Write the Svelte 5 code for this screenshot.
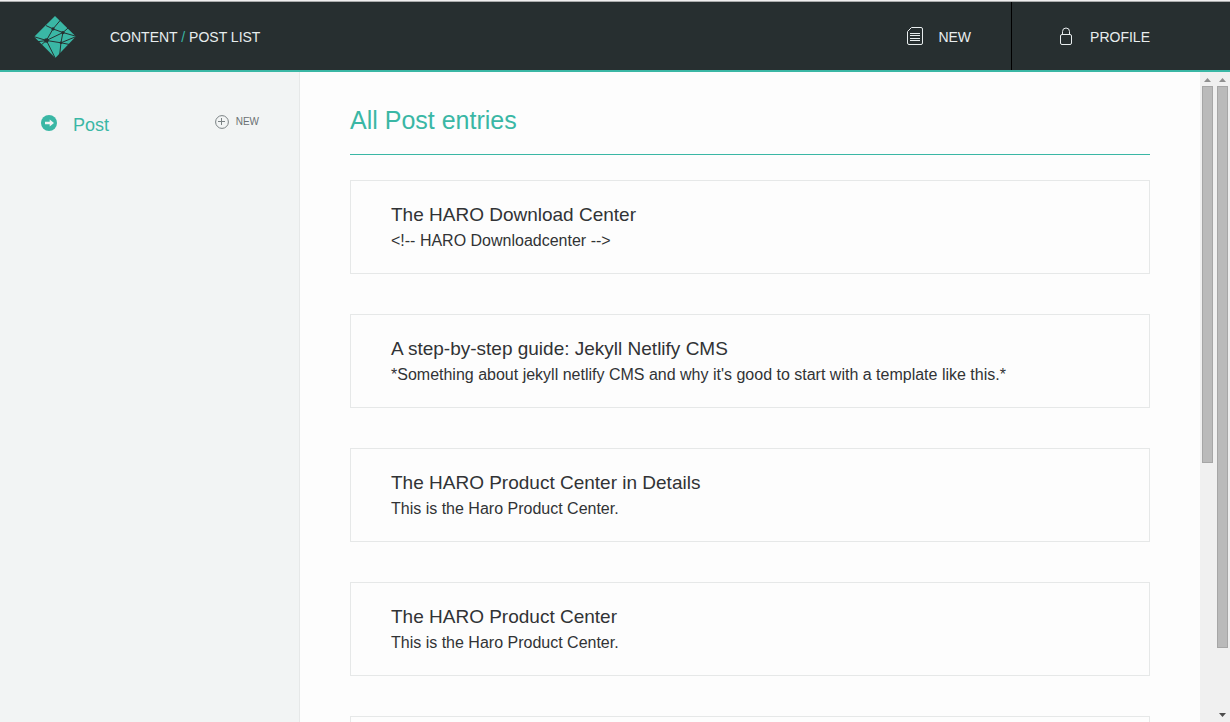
<script>
  const posts = [
    { title: 'The HARO Download Center', text: '<!-- HARO Downloadcenter -->' },
    {
      title: 'A step-by-step guide: Jekyll Netlify CMS',
      text: "*Something about jekyll netlify CMS and why it's good to start with a template like this.*"
    },
    { title: 'The HARO Product Center in Details', text: 'This is the Haro Product Center.' },
    { title: 'The HARO Product Center', text: 'This is the Haro Product Center.' },
    { title: '', text: '' }
  ];
</script>

<div class="app">
  <header>
    <a class="logo" href="#/" aria-label="Home">
      <svg width="42" height="42" viewBox="42 47 126 127">
        <path d="M105 47 168 109 106 174 42 110Z" fill="#3ab7a5" />
        <g stroke="#272f30" stroke-width="3" fill="none">
          <path d="M99 86 78 76M99 86 121 60M99 86 129 97M99 86 79 121" />
          <path d="M129 97 168 108M129 97 145 83M129 97 79 121M129 97 123 128" />
          <path d="M79 121 40 109M79 121 52 125M79 121 64 134M79 121 106 175M79 121 123 128" />
          <path d="M123 128 167 110M123 128 148 133M123 128 119 166" />
        </g>
        <g fill="#272f30">
          <circle cx="99" cy="86" r="5" />
          <circle cx="129" cy="97" r="5" />
          <circle cx="79" cy="121" r="7" />
          <circle cx="123" cy="128" r="4" />
        </g>
      </svg>
    </a>
    <nav class="crumbs" aria-label="Breadcrumb">
      <a href="#/content">CONTENT</a> <span>/</span> <a href="#/post">POST LIST</a>
    </nav>
    <div class="actions">
      <button class="new">
        <svg width="16" height="20" viewBox="0 0 16 20" fill="none" stroke="#e8edee">
          <path d="M4.500 1.500H14Q15.500 1.500 15.500 3V17Q15.500 18.500 14 18.500H2Q.5 18.500 .5 17V5.500Z" />
          <path d="M3 7.500H13M3 9.500H13M3 12.500H13M3 14.500H13" />
        </svg>
        <span>NEW</span>
      </button>
      <button class="profile">
        <svg width="14" height="20" viewBox="0 0 14 20" fill="none" stroke="#e8edee">
          <rect x="1.500" y="8.500" width="11" height="10" rx="1.500" />
          <path d="M3.500 8V5.500Q3.500 2 7 2T10.500 5.500V8" />
        </svg>
        <span>PROFILE</span>
      </button>
    </div>
  </header>

  <div class="body">
    <aside>
      <a class="collection" href="#/post">
        <svg width="16" height="16" viewBox="0 0 16 16">
          <circle cx="8" cy="8" r="8" fill="#3ab7a5" />
          <path d="M4 6.700H8.700V4.500L13 8 8.700 11.500V9.300H4Z" fill="#f2f4f4" />
        </svg>
        <span>Post</span>
      </a>
      <button class="add">
        <svg width="14" height="14" viewBox="0 0 14 14" fill="none" stroke="#7b8284">
          <circle cx="7" cy="7" r="6.400" />
          <path d="M6.500 3V10M3 6.500H10" />
        </svg>
        <span>NEW</span>
      </button>
    </aside>

    <main>
      <h1>All Post entries</h1>
      {#each posts as post}
        <article>
          <h2>{post.title}</h2>
          <p>{post.text}</p>
        </article>
      {/each}
    </main>

    <div class="track" aria-hidden="true">
      <svg width="7" height="4" viewBox="0 0 7 4"><path d="M0 4 3.500 0 7 4Z" fill="#8f8f8f" /></svg>
      <div class="thumb inner"></div>
    </div>
    <div class="track" aria-hidden="true">
      <svg width="7" height="4" viewBox="0 0 7 4"><path d="M0 4 3.500 0 7 4Z" fill="#8f8f8f" /></svg>
      <div class="thumb outer"></div>
      <svg class="down" width="7" height="4" viewBox="0 0 7 4"><path d="M0 0 3.500 4 7 0Z" fill="#4d4d4d" /></svg>
    </div>
  </div>
</div>

<style>
  :global(body) {
    margin: 0;
    overflow: hidden;
  }
  .app {
    display: flex;
    flex-direction: column;
    box-sizing: border-box;
    height: 100vh;
    overflow: hidden;
    border-top: 1px solid #efefef;
    font-family: 'Liberation Sans', Arial, sans-serif;
    font-size: 16px;
    color: #313335;
    background: #fdfdfd;
  }
  a {
    color: inherit;
    text-decoration: none;
  }
  button {
    display: flex;
    align-items: center;
    padding: 0;
    border: 0;
    background: none;
    color: inherit;
    font: inherit;
    cursor: pointer;
  }
  svg {
    display: block;
    flex: none;
  }
  header {
    flex: none;
    display: flex;
    align-items: center;
    height: 68px;
    padding-left: 34px;
    border-top: 1px solid #aaacac;
    border-bottom: 2px solid #3ab7a5;
    background: #272f30;
    color: #e8edee;
    font-size: 14px;
    line-height: 20px;
  }
  .logo {
    padding-top: 2px;
  }
  .crumbs {
    margin-left: 34px;
    padding-top: 2px;
  }
  .crumbs span {
    color: #3ab7a5;
  }
  .actions {
    display: flex;
    align-self: stretch;
    margin-left: auto;
  }
  .actions button {
    gap: 16px;
    padding: 0 40px 0 48px;
  }
  .actions .new {
    gap: 15px;
  }
  .actions span {
    padding-top: 2px;
  }
  .actions .profile {
    gap: 17px;
    padding: 0 80px 0 47px;
    border-left: 1px solid #000;
  }
  .body {
    flex: 1;
    display: flex;
    min-height: 0;
  }
  aside {
    flex: none;
    display: flex;
    align-items: flex-start;
    justify-content: space-between;
    box-sizing: border-box;
    width: 300px;
    padding: 40px 40px 0 41px;
    border-right: 1px solid #e6e8e8;
    background: #f2f4f4;
  }
  .collection {
    display: flex;
    align-items: center;
    gap: 16px;
    color: #3ab7a5;
    font-size: 18px;
    line-height: 18px;
  }
  .collection span {
    padding-top: 4px;
  }
  .add {
    gap: 7px;
    color: #6b7072;
    font-size: 10px;
    line-height: 20px;
  }
  main {
    flex: 1;
    min-width: 0;
    padding: 30px 50px 0;
    overflow: hidden;
  }
  h1 {
    margin: 0 0 25px;
    padding-bottom: 16px;
    border-bottom: 1px solid #3ab7a5;
    color: #3ab7a5;
    font-size: 25px;
    font-weight: 400;
    line-height: 36px;
  }
  article {
    box-sizing: border-box;
    min-height: 94px;
    margin-bottom: 40px;
    padding: 20px 40px;
    border: 1px solid #e6e8e8;
  }
  h2 {
    margin: 0;
    font-size: 19px;
    font-weight: 400;
    line-height: 28px;
  }
  p {
    margin: 0;
    line-height: 24px;
  }
  .track {
    flex: none;
    display: flex;
    flex-direction: column;
    align-items: center;
    box-sizing: border-box;
    width: 15px;
    padding: 6px 0 5px;
    background: #f0f0f0;
  }
  .thumb {
    box-sizing: border-box;
    width: 11px;
    margin-top: 4px;
    border: 1px solid #a6a6a6;
    background: #bababa;
  }
  .inner {
    height: 59%;
  }
  .outer {
    height: 88%;
  }
  .down {
    margin-top: auto;
  }
</style>
